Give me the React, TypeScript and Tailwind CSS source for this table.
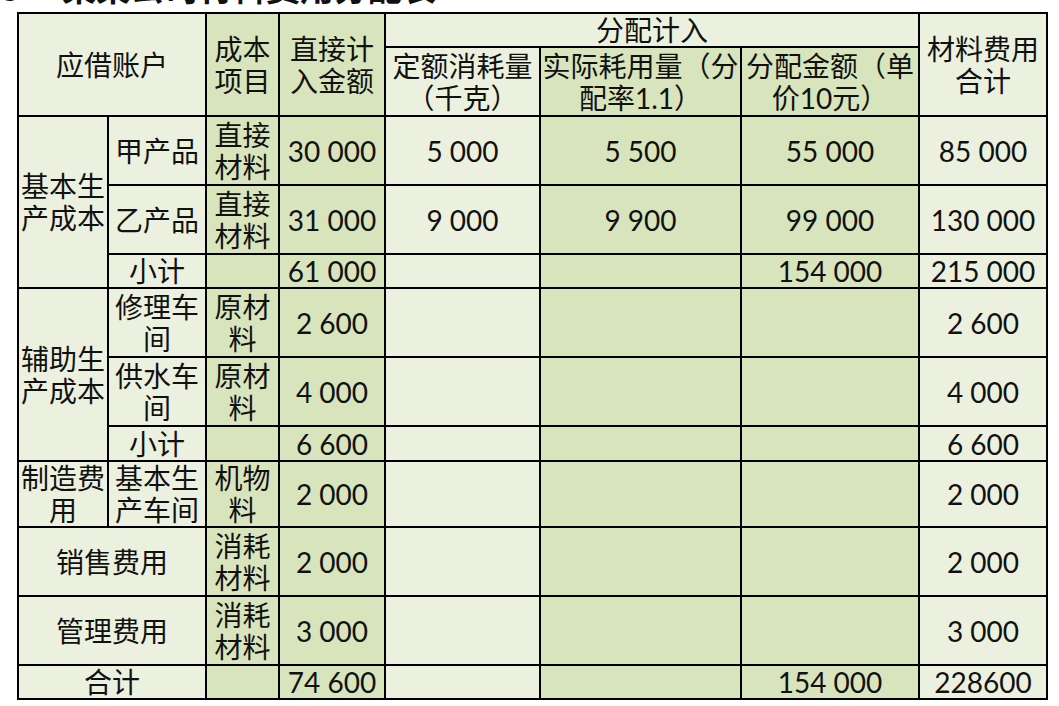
const L = "bg-[#ebf1de]";
const D = "bg-[#d8e4bc]";
const cell = "border-2 border-black p-0 text-center align-middle leading-[32px]";

type Row = {
  cost?: React.ReactNode;
  direct: string;
  quota?: string;
  actual?: string;
  amount?: string;
  total: string;
};

function Nums({ r }: { r: Row }) {
  return (
    <>
      <td className={`${cell} ${D}`}>{r.cost}</td>
      <td className={`${cell} ${D}`}>{r.direct}</td>
      <td className={`${cell} ${L}`}>{r.quota}</td>
      <td className={`${cell} ${D}`}>{r.actual}</td>
      <td className={`${cell} ${D}`}>{r.amount}</td>
      <td className={`${cell} ${L}`}>{r.total}</td>
    </>
  );
}

const direct = <>直接<br />材料</>;
const raw = <>原材<br />料</>;
const spare = <>机物<br />料</>;
const consum = <>消耗<br />材料</>;

export default function App() {
  return (
    <div
      className="min-h-screen bg-white text-[#111] overflow-hidden"
      style={{ fontFamily: 'Lato, "Noto Sans CJK SC", sans-serif' }}
    >
      {/* title, mostly cut off by the top of the shot */}
      <div className="-mt-[29px] -ml-[34px] h-[34px] text-[34px] leading-[34px] font-bold whitespace-nowrap">
        表3　&nbsp;某某公司材料费用分配表
      </div>

      <div className="pl-[17px] pt-[7px]">
        <table className="table-fixed border-collapse text-[28px]">
          <colgroup>
            <col className="w-[90px]" />
            <col className="w-[98px]" />
            <col className="w-[73px]" />
            <col className="w-[106px]" />
            <col className="w-[155px]" />
            <col className="w-[201px]" />
            <col className="w-[178px]" />
            <col className="w-[128px]" />
          </colgroup>
          <thead>
            <tr className="h-[34px]">
              <td rowSpan={2} colSpan={2} className={`${cell} ${L}`}>应借账户</td>
              <td rowSpan={2} className={`${cell} ${D}`}>成本<br />项目</td>
              <td rowSpan={2} className={`${cell} ${D}`}>直接计<br />入金额</td>
              <td colSpan={3} className={`${cell} ${L}`}>分配计入</td>
              <td rowSpan={2} className={`${cell} ${L}`}>材料费用<br />合计</td>
            </tr>
            <tr className="h-[69px]">
              <td className={`${cell} ${L}`}>定额消耗量<br />（千克）</td>
              <td className={`${cell} ${D}`}>实际耗用量（分<br />配率1.1）</td>
              <td className={`${cell} ${D}`}>分配金额（单<br />价10元）</td>
            </tr>
          </thead>
          <tbody>
            <tr className="h-[69px]">
              <td rowSpan={3} className={`${cell} ${L}`}>基本生<br />产成本</td>
              <td className={`${cell} ${L}`}>甲产品</td>
              <Nums r={{ cost: direct, direct: "30 000", quota: "5 000", actual: "5 500", amount: "55 000", total: "85 000" }} />
            </tr>
            <tr className="h-[69px]">
              <td className={`${cell} ${L}`}>乙产品</td>
              <Nums r={{ cost: direct, direct: "31 000", quota: "9 000", actual: "9 900", amount: "99 000", total: "130 000" }} />
            </tr>
            <tr className="h-[33px]">
              <td className={`${cell} ${L}`}>小计</td>
              <Nums r={{ direct: "61 000", amount: "154 000", total: "215 000" }} />
            </tr>

            <tr className="h-[69px]">
              <td rowSpan={3} className={`${cell} ${L}`}>辅助生<br />产成本</td>
              <td className={`${cell} ${L}`}>修理车<br />间</td>
              <Nums r={{ cost: raw, direct: "2 600", total: "2 600" }} />
            </tr>
            <tr className="h-[69px]">
              <td className={`${cell} ${L}`}>供水车<br />间</td>
              <Nums r={{ cost: raw, direct: "4 000", total: "4 000" }} />
            </tr>
            <tr className="h-[35px]">
              <td className={`${cell} ${L}`}>小计</td>
              <Nums r={{ direct: "6 600", total: "6 600" }} />
            </tr>

            <tr className="h-[66px]">
              <td className={`${cell} ${L}`}>制造费<br />用</td>
              <td className={`${cell} ${L}`}>基本生<br />产车间</td>
              <Nums r={{ cost: spare, direct: "2 000", total: "2 000" }} />
            </tr>
            <tr className="h-[69px]">
              <td colSpan={2} className={`${cell} ${L}`}>销售费用</td>
              <Nums r={{ cost: consum, direct: "2 000", total: "2 000" }} />
            </tr>
            <tr className="h-[69px]">
              <td colSpan={2} className={`${cell} ${L}`}>管理费用</td>
              <Nums r={{ cost: consum, direct: "3 000", total: "3 000" }} />
            </tr>
            <tr className="h-[34px]">
              <td colSpan={2} className={`${cell} ${L}`}>合计</td>
              <Nums r={{ direct: "74 600", amount: "154 000", total: "228600" }} />
            </tr>
          </tbody>
        </table>
      </div>
    </div>
  );
}
